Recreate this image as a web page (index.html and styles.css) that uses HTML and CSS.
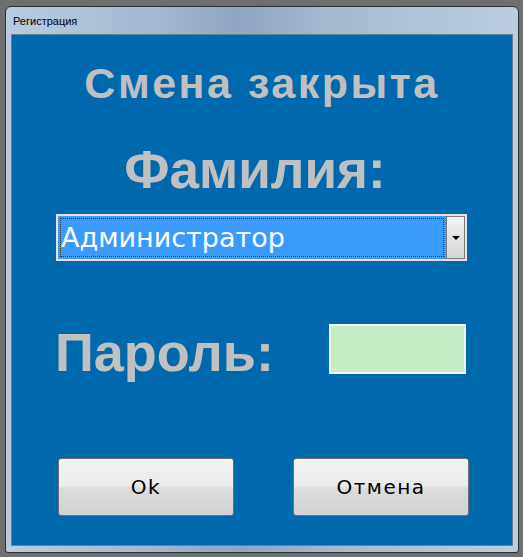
FILE: index.html
```html
<!DOCTYPE html>
<html>
<head>
    <title>Регистрация</title>
    <link rel="stylesheet" href="styles.css">
</head>
<body>
    <div class="window">
        <div class="titlebar">Регистрация</div>
        <div class="client">
            <h1 class="title">Смена закрыта</h1>
            <h2 class="label center">Фамилия:</h2>

            <div class="combo">
                <div class="combo-text">Администратор</div>
                <div class="combo-btn"><span class="arrow"></span></div>
            </div>

            <div class="pass-row">
                <h2 class="label pass-label">Пароль:</h2>
                <div class="pass-box"></div>
            </div>

            <div class="buttons">
                <button class="btn">Ok</button>
                <button class="btn">Отмена</button>
            </div>
        </div>
    </div>
</body>
</html>
```

FILE: styles.css
```css
/* фон рабочего стола */
body {
    margin: 0;
    background: #6f6f6f;
    font-family: "DejaVu Sans", sans-serif;
}

/* окно */
.window {
    margin: 6px 4px 4px 5px;
    height: 547px;
    box-sizing: border-box;
    border: 1px solid #2b2f36;
    border-radius: 6px 6px 3px 3px;
    background: linear-gradient(90deg, #b9cbdf 0%, #a3b7cf 30%, #8ea6c0 45%, #a7bad0 65%, #bccde0 100%);
    padding: 0 5px 6px 5px;
}

.titlebar {
    height: 27px;
    line-height: 29px;
    font-size: 11px;
    font-family: "Liberation Sans", sans-serif;
    color: #000;
    padding-left: 2px;
}

.client {
    background: #0069ae;
    height: 512px;
    border: 1px solid #6a7d95;
    box-sizing: border-box;
    padding-top: 24px;
}

/* заголовки */
.title {
    margin: 0;
    text-align: center;
    color: #c0c0c0;
    font-family: "Liberation Sans", sans-serif;
    font-size: 43px;
    letter-spacing: 2.5px;
    line-height: 48px;
    font-weight: bold;
}

.label {
    margin: 0;
    color: #c0c0c0;
    font-family: "Liberation Sans", sans-serif;
    font-size: 53px;
    font-weight: bold;
    line-height: 59px;
}
.center {
    text-align: center;
    margin-top: 33px;
    padding-right: 14px;
}

/* выпадающий список */
.combo {
    display: flex;
    margin: 15px 0 0 44px;
    width: 411px;
    height: 47px;
    box-sizing: border-box;
    border: 2px solid #e4e4e4;
    background: #3a9bfd;
}
.combo-text {
    flex: 1;
    color: #fff;
    font-size: 27px;
    line-height: 39px;
    padding-left: 1px;
    margin: 2px;
    outline: 1px dotted #333;
    outline-offset: -1px;
}
.combo-btn {
    width: 17px;
    border: 1px solid #7a7a7a;
    background: linear-gradient(#f2f2f2, #d6d6d6);
    display: flex;
    align-items: center;
    justify-content: center;
}
.arrow {
    border-left: 4px solid transparent;
    border-right: 4px solid transparent;
    border-top: 4px solid #000;
}

/* пароль */
.pass-row {
    display: flex;
    align-items: flex-start;
    margin: 63px 0 0 44px;
}
.pass-label {
    width: 274px;
    margin-top: -2px;
    margin-left: -1px;
    font-size: 54px;
    line-height: 60px;
}
.pass-box {
    width: 137px;
    height: 50px;
    box-sizing: border-box;
    border: 2px solid #eef4fa;
    background: #c6ebc5;
}

/* кнопки */
.buttons {
    display: flex;
    margin: 76px 0 0 46px;
    gap: 59px;
}
.btn {
    width: 176px;
    height: 58px;
    border: 1px solid #707070;
    border-radius: 3px;
    background: linear-gradient(#f2f2f2 0%, #ebebeb 48%, #dcdcdc 52%, #d2d2d2 100%);
    font-family: "DejaVu Sans", sans-serif;
    font-size: 20px;
    letter-spacing: 1.5px;
    color: #000;
    padding: 0;
}
```
